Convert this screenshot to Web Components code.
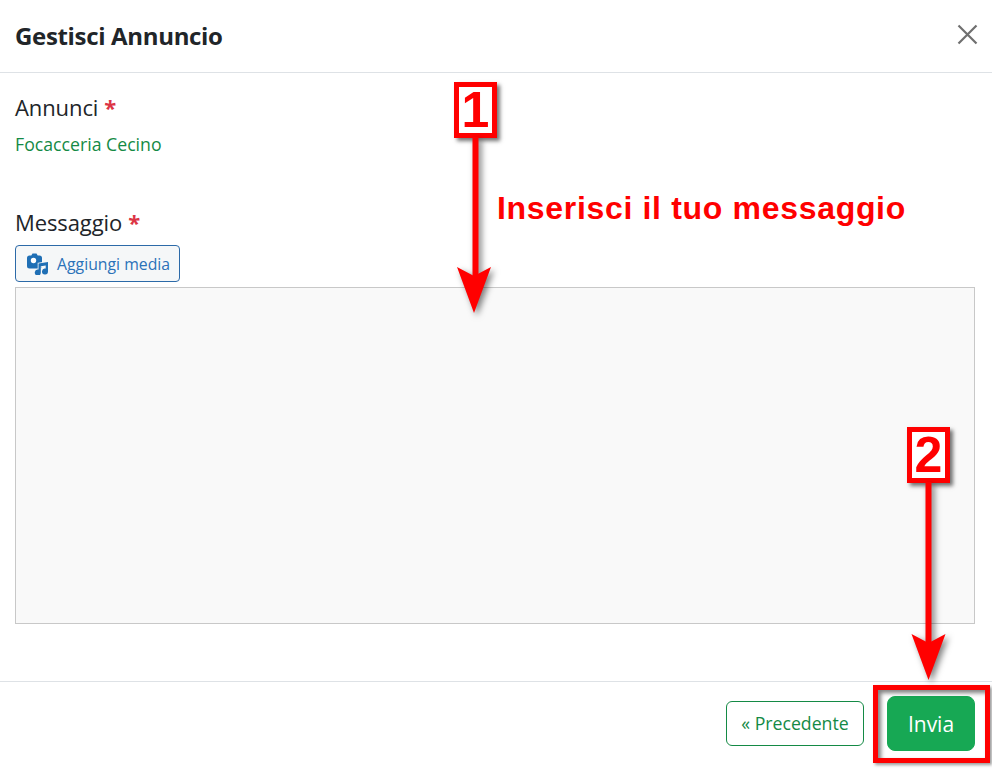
<!DOCTYPE html>
<html lang="it">
<head>
<meta charset="utf-8">
<title>Gestisci Annuncio</title>
<style>
  html, body { margin: 0; padding: 0; background: #fff; }
  body { width: 992px; height: 769px; overflow: hidden; position: relative; font-family: "Open Sans", "Noto Sans", sans-serif; color: #212529; }
</style>
</head>
<body>
<manage-dialog>
  <span slot="title">Gestisci Annuncio</span>
  <form-field label="Annunci" style="height:115px">
    <span style="color:#148a45">Focacceria Cecino</span>
  </form-field>
  <form-field label="Messaggio">
    <media-button>Aggiungi media</media-button>
    <message-box></message-box>
  </form-field>
  <action-button slot="footer" kind="outline">« Precedente</action-button>
  <action-button slot="footer" kind="solid">Invia</action-button>
</manage-dialog>

<!-- red marks drawn over the screenshot -->
<note-marker n="1" style="left:454px;top:82px" tip="176" dx="-1.5"></note-marker>
<note-marker n="2" style="left:907px;top:427px" tip="198" dx="0"></note-marker>
<note-label style="left:497px;top:188px">Inserisci il tuo messaggio</note-label>
<note-frame style="left:873px;top:685px;width:117px;height:78px"></note-frame>

<script>
class ManageDialog extends HTMLElement {
  constructor() {
    super()
    const root = this.attachShadow({ mode: 'open' })
    root.innerHTML = `<style>
      :host { display: flex; flex-direction: column; width: 992px; height: 769px; }
      header { box-sizing: content-box; height: 70px; padding: 0 15px 2px; border-bottom: 1px solid #dee2e6; display: flex; align-items: center; justify-content: space-between; flex: none; }
      h1 { margin: 0; font-size: 24px; font-weight: 700; letter-spacing: -.33px; }
      svg { display: block; margin: 0 0 1px; }
      main { flex: 1; padding: 21px 17px 0 15px; }
      footer { box-sizing: border-box; height: 88px; padding: 0 17px 4px 0; border-top: 1px solid #dee2e6; display: flex; align-items: center; justify-content: flex-end; gap: 23px; flex: none; }
    </style>
    <header>
      <h1><slot name="title"></slot></h1>
      <svg width="21" height="21" viewBox="0 0 21 21" style="margin-right:-1px"><path d="M1.500 1.500 19.500 19.500M19.500 1.500 1.500 19.500" stroke="#6f6f6f" stroke-width="2.2" fill="none"/></svg>
    </header>
    <main><slot></slot></main>
    <footer><slot name="footer"></slot></footer>`
  }
}

class FormField extends HTMLElement {
  constructor() {
    super()
    const root = this.attachShadow({ mode: 'open' })
    root.innerHTML = `<style>
      :host { display: block; font-size: 17.700px; }
      .lab { font-size: 22px; font-weight: 500; line-height: 27px; margin-bottom: 11px; letter-spacing: -.1px; display: flex; gap: 6px; }
      .lab i { color: #dc3545; font-style: normal; font-weight: 700; }
      .body { line-height: 24px; }
    </style>
    <div class="lab">${this.getAttribute('label')}<i>*</i></div>
    <div class="body"><slot></slot></div>`
  }
}

class MediaButton extends HTMLElement {
  constructor() {
    super()
    const root = this.attachShadow({ mode: 'open' })
    root.innerHTML = `<style>
      :host { display: flex; align-items: center; gap: 8px; box-sizing: border-box; width: 165px; height: 37px; margin-top: -2px; padding-left: 11px; border: 1px solid #2c6aa8; border-radius: 4px; background: #f5f7f8; color: #2b72b8; font-size: 15.800px; }
      svg { display: block; flex: none; }
    </style>
    <svg width="22" height="22" viewBox="0 0 22 22" fill="#1f6fb5">
      <path d="M2.500 2.500h1.800L5.500.500h4l1.200 2h1.800A2.500 2.500 0 0 1 15 5v8a2.500 2.500 0 0 1-2.500 2.500h-10A2.500 2.500 0 0 1 0 13V5a2.500 2.500 0 0 1 2.500-2.500z"/>
      <circle cx="6.500" cy="7.500" r="2.700" fill="#fff"/>
      <path d="M11.500 10.500l9.500-1.500v9.500a3 3 0 1 1-2.300-2.900V12.500l-4.900.8v6.200a3 3 0 1 1-2.300-2.900z" stroke="#f5f7f8" stroke-width="1.600" paint-order="stroke"/>
    </svg>
    <slot></slot>`
  }
}

class MessageBox extends HTMLElement {
  constructor() {
    super()
    const root = this.attachShadow({ mode: 'open' })
    root.innerHTML = `<style>
      :host { display: block; box-sizing: border-box; height: 337px; margin-top: 5px; background: #f9f9f9; border: 1px solid #c8c8c8; }
    </style>`
  }
}

class ActionButton extends HTMLElement {
  constructor() {
    super()
    const root = this.attachShadow({ mode: 'open' })
    const solid = this.getAttribute('kind') === 'solid'
    root.innerHTML = `<style>
      :host { display: flex; align-items: center; justify-content: center; box-sizing: border-box;
        width: ${solid ? 88 : 138}px; height: ${solid ? 55 : 45}px; border-radius: ${solid ? 8 : 6}px;
        padding-bottom: ${solid ? 0 : 2}px;
        border: 1px solid #148a45; font-size: ${solid ? 21 : 17.7}px;
        background: ${solid ? '#17a854' : '#fff'}; color: ${solid ? '#fff' : '#148a45'}; ${solid ? 'border-color:#17a854;' : ''} }
    </style><slot></slot>`
  }
}

class NoteMarker extends HTMLElement {
  constructor() {
    super()
    const tip = parseInt(this.getAttribute('tip'), 10)
    const dx = parseFloat(this.getAttribute('dx')) || 0
    const root = this.attachShadow({ mode: 'open' })
    const c = 21.5 + dx
    root.innerHTML = `<style>
      :host { position: absolute; display: block; width: 60px; height: ${tip + 70}px; }
      .num { box-sizing: border-box; width: 43px; height: 56px; border: 5px solid #f00; background: #fff; color: #f00;
        font: 700 50px/46px "Liberation Sans", sans-serif; text-align: center; box-shadow: 3px 3px 4px rgba(0,0,0,.55); }
      svg { position: absolute; left: 0; top: 55px; overflow: visible; filter: drop-shadow(3px 3px 3px rgba(0,0,0,.5)); }
    </style>
    <div class="num">${this.getAttribute('n')}</div>
    <svg width="43" height="${tip}" viewBox="0 0 43 ${tip}">
      <path d="M18.500 0h6v${tip - 36}h-6z" fill="#f00"/>
      <path d="M${c - 17} ${tip - 46}L${c} ${tip - 37}L${c + 17} ${tip - 46}L${c} ${tip}z" fill="#f00"/>
    </svg>`
  }
}

class NoteLabel extends HTMLElement {
  constructor() {
    super()
    this.attachShadow({ mode: 'open' }).innerHTML = `<style>
      :host { position: absolute; display: block; font: 700 32px/40px "Liberation Sans", sans-serif; letter-spacing: .68px; color: #f00; white-space: nowrap; }
    </style><slot></slot>`
  }
}

class NoteFrame extends HTMLElement {
  constructor() {
    super()
    this.attachShadow({ mode: 'open' }).innerHTML = `<style>
      :host { position: absolute; display: block; box-sizing: border-box; border: 5px solid #f00; box-shadow: inset 3px 3px 4px rgba(0,0,0,.5), 2px 2px 3px rgba(0,0,0,.4); }
    </style>`
  }
}

customElements.define('manage-dialog', ManageDialog)
customElements.define('form-field', FormField)
customElements.define('media-button', MediaButton)
customElements.define('message-box', MessageBox)
customElements.define('action-button', ActionButton)
customElements.define('note-marker', NoteMarker)
customElements.define('note-label', NoteLabel)
customElements.define('note-frame', NoteFrame)
</script>
</body>
</html>
